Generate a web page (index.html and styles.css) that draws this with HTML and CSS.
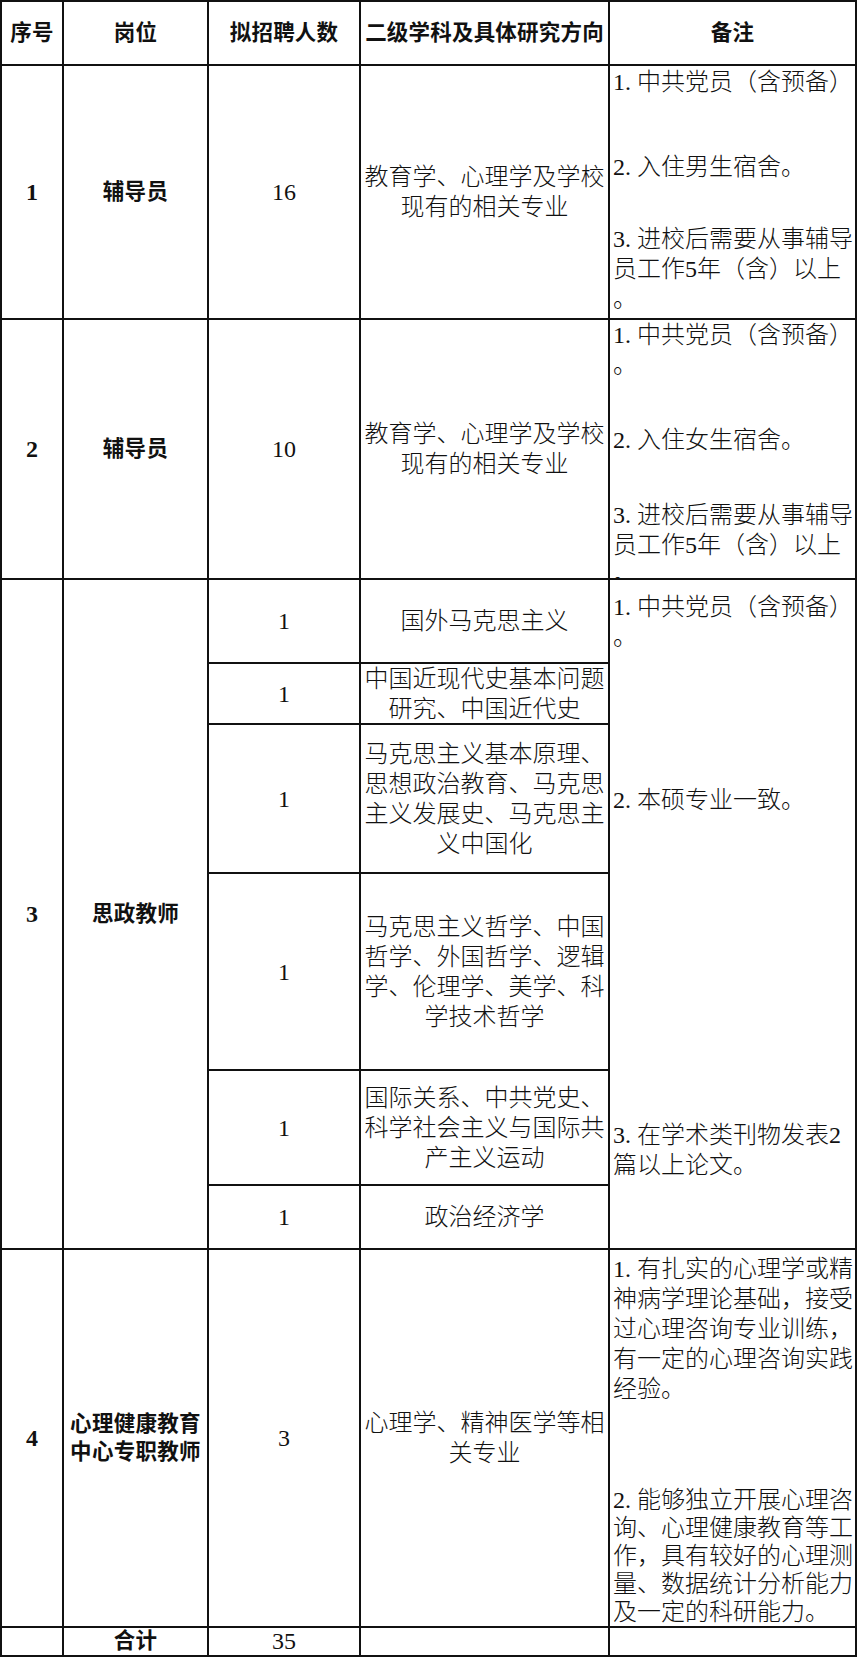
FILE: index.html
```html
<!DOCTYPE html>
<html lang="zh-CN">
<head>
<meta charset="utf-8">
<title>招聘岗位表</title>
<link rel="stylesheet" href="styles.css">
</head>
<body>
<div class="sheet">
  <div class="c hd">序号</div>
  <div class="c hd">岗位</div>
  <div class="c hd">拟招聘人数</div>
  <div class="c hd">二级学科及具体研究方向</div>
  <div class="c hd">备注</div>

  <div class="c idx">1</div>
  <div class="c lbl">辅导员</div>
  <div class="c num">16</div>
  <div class="c txt">教育学、心理学及学校<br>现有的相关专业</div>
  <div class="rm rm1">
    <p class="p"><span class="no">1.</span>中共党员（含预备）</p>
    <p class="p g55"><span class="no">2.</span>入住男生宿舍。</p>
    <p class="p g42"><span class="no">3.</span>进校后需要从事辅导<br>员工作5年（含）以上<br>。</p>
  </div>

  <div class="c idx">2</div>
  <div class="c lbl">辅导员</div>
  <div class="c num">10</div>
  <div class="c txt">教育学、心理学及学校<br>现有的相关专业</div>
  <div class="rm rm2">
    <p class="p"><span class="no">1.</span>中共党员（含预备）<br>。</p>
    <p class="p g45"><span class="no">2.</span>入住女生宿舍。</p>
    <p class="p g45"><span class="no">3.</span>进校后需要从事辅导<br>员工作5年（含）以上<br>。</p>
  </div>

  <div class="c idx span6">3</div>
  <div class="c lbl span6">思政教师</div>
  <div class="c num">1</div>
  <div class="c txt">国外马克思主义</div>
  <div class="rm rm3 span6">
    <p class="p"><span class="no">1.</span>中共党员（含预备）<br>。</p>
    <p class="p g133"><span class="no">2.</span>本硕专业一致。</p>
    <p class="p g305"><span class="no">3.</span>在学术类刊物发表2<br>篇以上论文。</p>
  </div>
  <div class="c num">1</div>
  <div class="c txt">中国近现代史基本问题<br>研究、中国近代史</div>
  <div class="c num">1</div>
  <div class="c txt">马克思主义基本原理、<br>思想政治教育、马克思<br>主义发展史、马克思主<br>义中国化</div>
  <div class="c num">1</div>
  <div class="c txt">马克思主义哲学、中国<br>哲学、外国哲学、逻辑<br>学、伦理学、美学、科<br>学技术哲学</div>
  <div class="c num">1</div>
  <div class="c txt">国际关系、中共党史、<br>科学社会主义与国际共<br>产主义运动</div>
  <div class="c num">1</div>
  <div class="c txt">政治经济学</div>

  <div class="c idx">4</div>
  <div class="c lbl lbl2">心理健康教育<br>中心专职教师</div>
  <div class="c num">3</div>
  <div class="c txt">心理学、精神医学等相<br>关专业</div>
  <div class="rm rm4">
    <p class="p"><span class="no">1.</span>有扎实的心理学或精<br>神病学理论基础，接受<br>过心理咨询专业训练，<br>有一定的心理咨询实践<br>经验。</p>
    <p class="p p-tight g82"><span class="no">2.</span>能够独立开展心理咨<br>询、心理健康教育等工<br>作，具有较好的心理测<br>量、数据统计分析能力<br>及一定的科研能力。</p>
  </div>

  <div class="c"></div>
  <div class="c lbl total">合计</div>
  <div class="c num total">35</div>
  <div class="c"></div>
  <div class="c"></div>
</div>
</body>
</html>
```

FILE: styles.css
```css
html, body {
  margin: 0;
  padding: 0;
  background: #ffffff;
}

.sheet {
  display: grid;
  grid-template-columns: 60px 143px 150px 247px 245px;
  grid-template-rows: 62px 252px 258px 82px 59px 147px 195px 113px 62px 376px 27px;
  gap: 2px;
  padding: 2px;
  background: #111111;
  font-family: "Liberation Serif", "Noto Sans CJK SC", serif;
  font-size: 24px;
  font-weight: 300;
  line-height: 30px;
  color: #111111;
}

.c {
  background: #ffffff;
  display: flex;
  align-items: center;
  justify-content: center;
  text-align: center;
  white-space: nowrap;
  overflow: hidden;
  padding: 0 3px;
}

.span6 {
  grid-row: span 6;
}

.hd {
  font-weight: 700;
  font-size: 21.5px;
  letter-spacing: 0.2px;
}

.idx {
  font-weight: 700;
  font-size: 24px;
}

.lbl {
  font-weight: 700;
  font-size: 21.5px;
  letter-spacing: 0.3px;
}

.lbl2 {
  line-height: 28px;
}

.num {
  font-size: 24px;
}

.txt {
  font-size: 24px;
}

.total {
  line-height: 27px;
  align-items: flex-end;
}

.rm {
  background: #ffffff;
  white-space: nowrap;
  overflow: hidden;
  padding: 0 0 0 3px;
  text-align: left;
}

.rm1 { padding-top: 1px; }
.rm2 { padding-top: 0; }
.rm3 { padding-top: 12px; }
.rm4 { padding-top: 4px; }

.p {
  margin: 0;
}

.p-tight {
  line-height: 28px;
}

.no {
  margin-right: 6px;
}

.g42 { margin-top: 42px; }
.g45 { margin-top: 45px; }
.g55 { margin-top: 55px; }
.g82 { margin-top: 82px; }
.g133 { margin-top: 133px; }
.g305 { margin-top: 305px; }
```
